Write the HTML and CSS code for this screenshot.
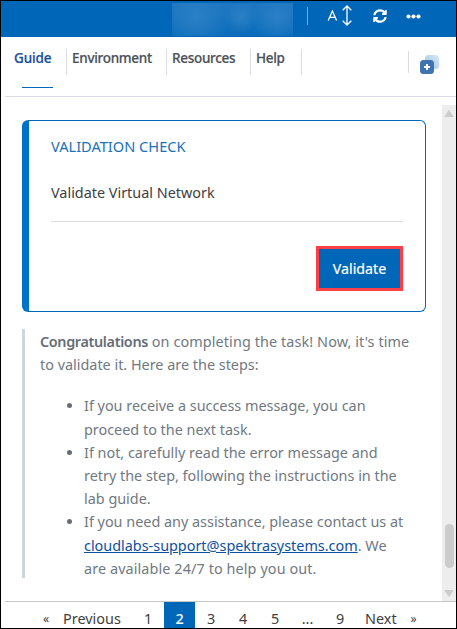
FILE: index.html
```html
<!DOCTYPE html>
<html lang="en">
<head>
<meta charset="utf-8">
<title>Lab Guide</title>
<link rel="stylesheet" href="styles.css">
</head>
<body>
<div class="frame">
  <header class="topbar">
    <div class="account"></div>
    <div class="bar-divider"></div>
    <svg class="text-size" width="27" height="22" viewBox="0 0 27 22" fill="none" stroke="#fff" stroke-width="1.3"><path d="M1.200 15.500 5.400 6 9.600 15.500M2.700 12.300h5.400M20 1v19M15.700 5.200 20 1l4.300 4.200M15.700 15.800 20 20l4.300-4.200"/></svg>
    <svg class="refresh" width="14" height="14" viewBox="0 0 512 512" fill="#fff"><path d="M370.700 133.300C339.500 104 298.900 88 255.800 88c-77.500.1-144.300 53.200-162.800 126.900-1.300 5.400-6.100 9.100-11.700 9.100H24.100c-7.500 0-13.200-6.800-11.800-14.200C33.900 94.900 134.800 8 256 8c66.400 0 126.800 26.100 171.300 68.700L463 41c15.100-15.100 41-4.400 41 17v134c0 13.300-10.700 24-24 24H346c-21.400 0-32.100-25.900-17-41l41.700-41.700zM32 296h134c21.400 0 32.100 25.900 17 41l-41.800 41.800c31.300 29.300 71.800 45.300 114.900 45.200 77.400-.1 144.300-53.100 162.800-126.800 1.300-5.400 6.100-9.200 11.700-9.200h57.300c7.500 0 13.200 6.800 11.800 14.200C478.100 417.100 377.200 504 256 504c-66.400 0-126.800-26.100-171.300-68.700L49 471c-15.100 15.100-41 4.400-41-17V320c0-13.300 10.700-24 24-24z"/></svg>
    <svg class="more" width="15" height="5" viewBox="0 0 15 5" fill="#fff"><circle cx="2.500" cy="2.500" r="2.100"/><circle cx="7.500" cy="2.500" r="2.100"/><circle cx="12.500" cy="2.500" r="2.100"/></svg>
  </header>
  <nav class="tabs">
    <a class="tab tab-guide">Guide</a>
    <a class="tab tab-env">Environment</a>
    <a class="tab tab-res">Resources</a>
    <a class="tab tab-help">Help</a>
    <div class="split">
      <svg width="19" height="19" viewBox="0 0 19 19"><defs><linearGradient id="pane" x1="0" y1="1" x2="1" y2="0"><stop offset="0" stop-color="#9cc3e2"/><stop offset="1" stop-color="#d8e8f3"/></linearGradient></defs><rect x="5" width="14" height="14" rx="3.500" fill="url(#pane)"/><rect y="5" width="14" height="14" rx="3.500" fill="#3f74b0"/><path d="M7 9v6M4 12h6" stroke="#fff" stroke-width="2"/></svg>
    </div>
  </nav>
  <div class="body">
    <main class="content">
      <section class="card">
        <h2>VALIDATION CHECK</h2>
        <p>Validate Virtual Network</p>
        <div class="actions"><button>Validate</button></div>
      </section>
      <blockquote>
        <p><strong>Congratulations</strong><span class="lead"> on completing the task! Now, it's time</span><br>to validate it. Here are the steps:</p>
        <ul>
          <li>If you receive a success message, you can<br>proceed to the next task.</li>
          <li>If not, carefully read the error message and<br>retry the step, following the instructions in the<br>lab guide.</li>
          <li>If you need any assistance, please contact us at<br><a>cloudlabs-support@spektrasystems.com</a>. We<br><span class="lead">are available 24/7 to help you out.</span></li>
        </ul>
      </blockquote>
    </main>
    <aside class="scroll">
      <svg width="10" height="7" viewBox="0 0 10 7"><path d="M1 6.500 5 .5 9 6.500z" fill="#ccc" stroke="#ccc" stroke-linejoin="round"/></svg>
      <div class="thumb"></div>
      <svg width="10" height="7" viewBox="0 0 10 7"><path d="M1 .5 5 6.500 9 .5z" fill="#ccc" stroke="#ccc" stroke-linejoin="round"/></svg>
    </aside>
  </div>
  <footer class="pager">
    <span class="prev"><small>«</small><span>Previous</span></span>
    <span class="page">1</span><span class="page current">2</span><span class="page">3</span><span class="page">4</span><span class="page">5</span><span class="page gap">...</span><span class="page">9</span>
    <span class="next"><span>Next</span><small>»</small></span>
  </footer>
</div>
</body>
</html>
```

FILE: styles.css
```css
* { box-sizing: border-box; }
body { margin: 0; background: #fff; font: 14.400px/23.200px "Noto Sans", "Open Sans", sans-serif; }
.frame { width: 457px; height: 629px; border: 1px solid #000; overflow: hidden; display: flex; flex-direction: column; }
.topbar { flex: 0 0 36px; background: #0067b8; display: flex; align-items: flex-start; }
.account { width: 121px; height: 33px; margin: 2px 0 0 171px; background: radial-gradient(circle at 20% 40%, #2b80c6 0, transparent 35%), radial-gradient(circle at 57% 40%, #2b80c6 0, transparent 24%), radial-gradient(circle at 87% 40%, #2b80c6 0, transparent 24%), linear-gradient(#1d76c0, #0b6cba); }
.bar-divider { width: 1px; height: 18px; margin: 6px 0 0 14px; background: #6badd9; }
.text-size { margin: 4px 0 0 19px; }
.refresh { margin: 8px 0 0 19px; }
.more { margin: 13px 0 0 19px; }
.tabs { flex: 0 0 60px; margin-left: 4px; border-bottom: 1px solid #d9dbe6; padding-top: 12px; display: flex; }
.tab { height: 26px; border-right: 1px solid #d9dbe6; padding: 0 0 0 5px; line-height: 19px; font-size: 13.500px; font-weight: 500; letter-spacing: -.3px; color: #4b5158; -webkit-text-stroke: .2px; white-space: nowrap; }
.tab-guide { width: 62px; height: 39px; padding-left: 9px; letter-spacing: -.15px; color: #174d96; border: 0; background: linear-gradient(#0067b8, #0067b8) 17px 38px / 31px 1px no-repeat, linear-gradient(#d9dbe6, #d9dbe6) 61px 0 / 1px 26px no-repeat; }
.tab-env { width: 100px; }
.tab-res { width: 84px; }
.tab-help { width: 51px; }
.split { margin: 2px 0 0 106px; height: 22px; border-left: 1px solid #d9dbe6; padding: 4px 0 0 11px; }
.body { flex: 1; min-height: 0; display: flex; }
.content { flex: 1; padding: 23px 16px 0 21px; }
.card { height: 192px; border: 1px solid #0067b8; border-left: 7px solid #0072c9; border-radius: 6px; padding: 14px 22px 0; }
.card h2 { margin: 0; font-size: 14.600px; line-height: 23px; font-weight: 400; color: #1971ba; }
.card p { margin: 23px 0 0; height: 41px; border-bottom: 1px solid #dedede; line-height: 23px; color: #404040; }
.actions { display: flex; justify-content: flex-end; margin-top: 24px; }
button { width: 87px; height: 45px; border: 3px solid #fc4045; background: #0067b8; color: #fff; font: 400 14.200px/20px "Noto Sans", sans-serif; -webkit-text-stroke: .2px; padding: 0; }
blockquote { margin: 17px 0 0; height: 249px; border-left: 3px solid #ced5de; padding-left: 15px; color: #707981; white-space: nowrap; }
blockquote p { margin: 0; padding-top: 1px; }
strong { font-weight: 600; color: #656e77; letter-spacing: -.35px; }
.lead { letter-spacing: .1px; }
ul { margin: 18px 0 0; padding-left: 44px; }
li::marker { color: #656e77; }
a { color: #0d4fa0; }
li a { text-decoration: underline; }
.scroll { width: 14px; margin-top: 8px; background: #ededed; display: flex; flex-direction: column; align-items: center; padding: 5px 0 4px; }
.thumb { width: 9px; height: 44px; margin: auto 0 22px; border-radius: 5px; background: #ccc; }
.pager { flex: 0 0 27px; min-height: 0; height: 27px; margin-left: 4px; border-top: 1px solid #c6c6c6; display: flex; color: #404040; line-height: 34px; }
.prev { width: 127px; padding-left: 38px; display: flex; gap: 14px; }
.page { width: 32px; text-align: center; }
.current { background: #0067b8; color: #fff; width: 31px; font-weight: 500; }
.gap { width: 33px; }
.next { display: flex; gap: 14px; padding-left: 9px; }
small { font-size: 12px; }
```
